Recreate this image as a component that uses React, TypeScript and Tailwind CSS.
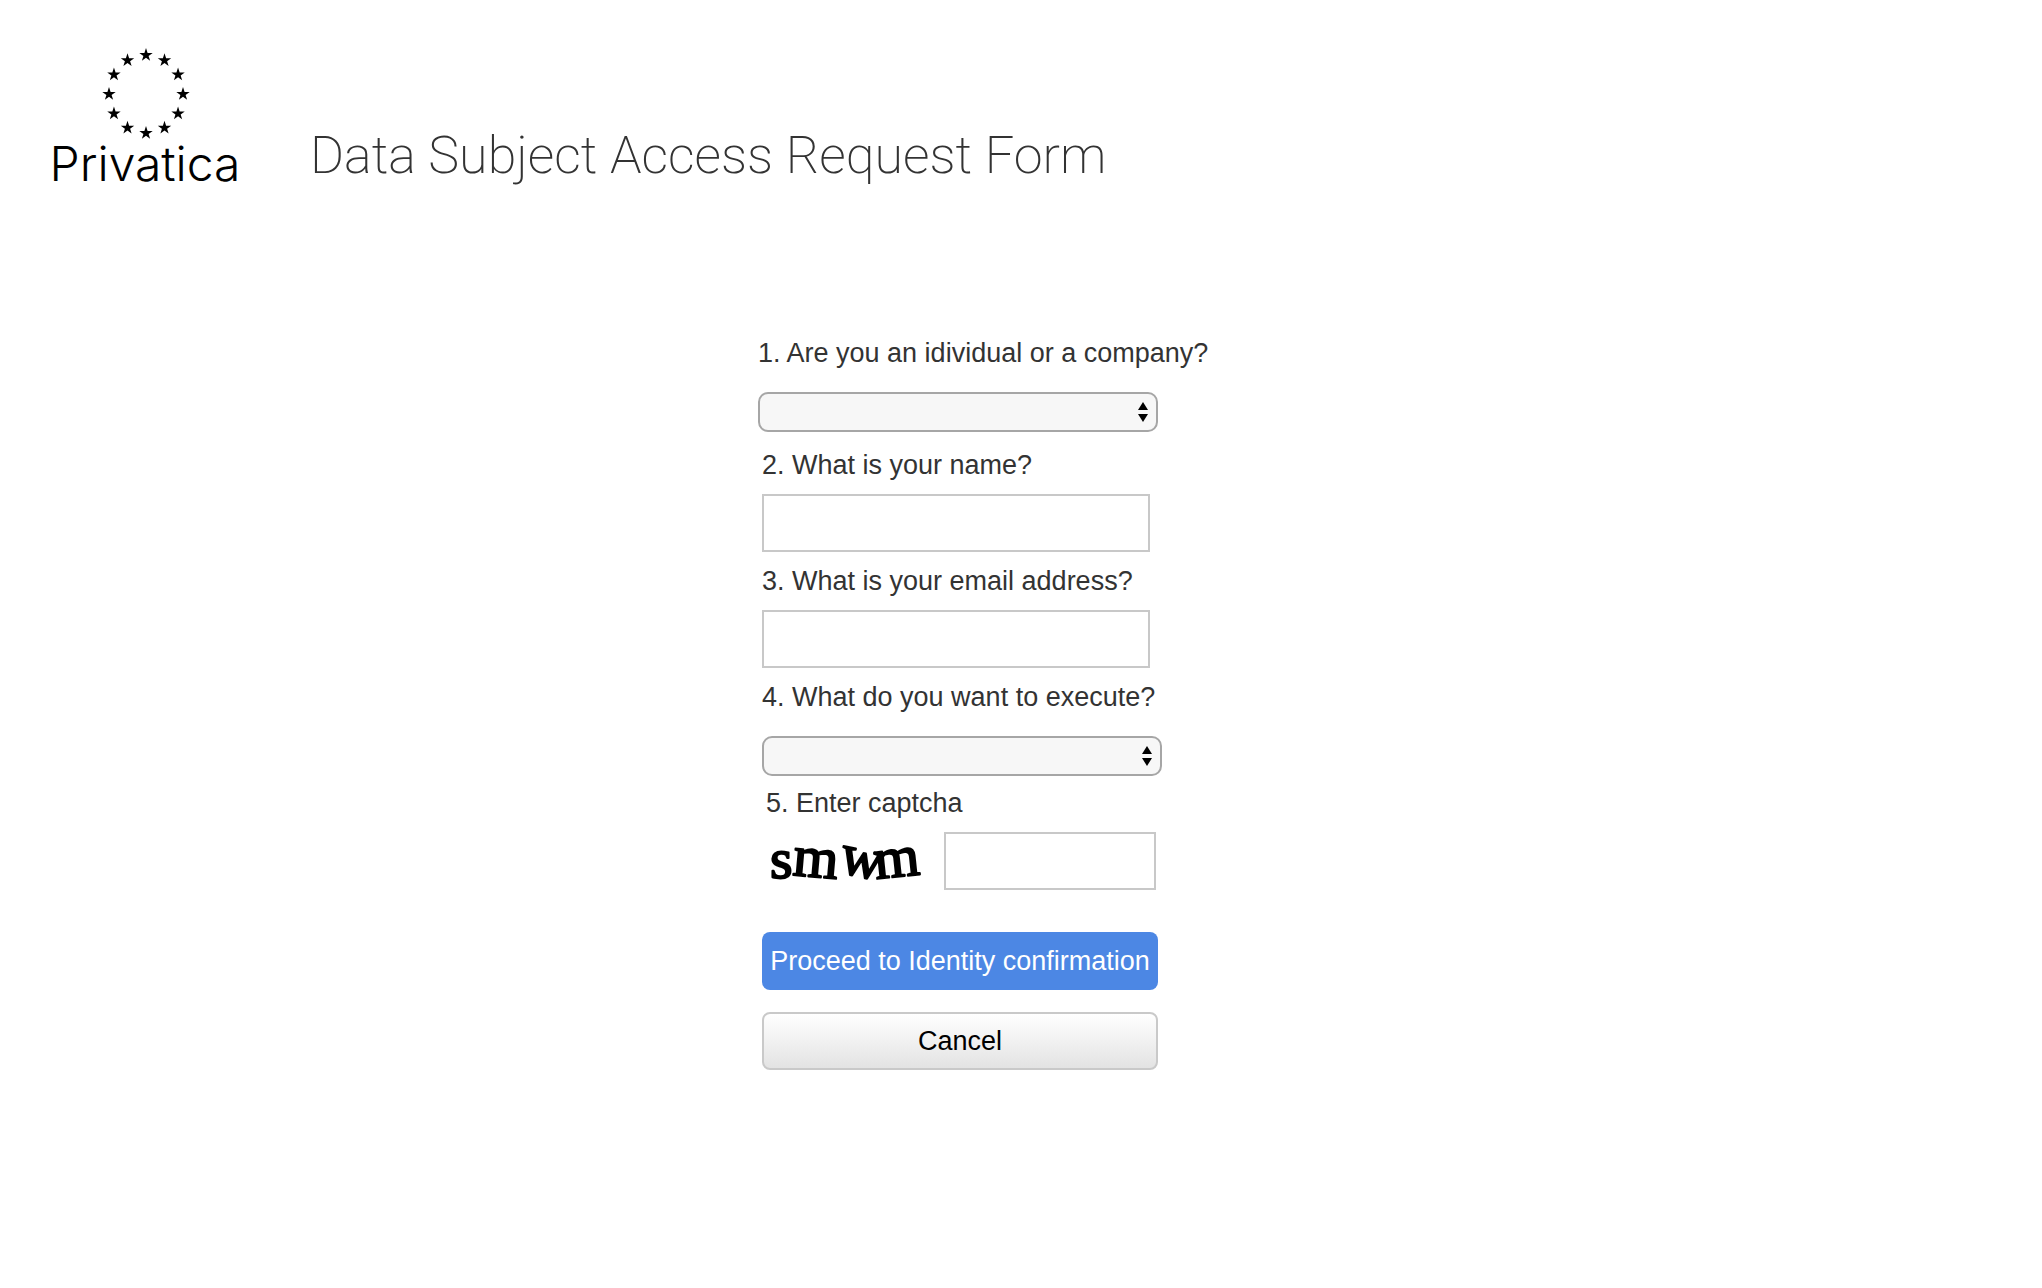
import type { ReactNode } from "react";

const stars = Array.from({ length: 12 }, (_, i) => {
  const angle = (i * Math.PI) / 6;
  return { x: 96 + 37 * Math.sin(angle), y: 51 - 39 * Math.cos(angle) };
});

function Logo() {
  return (
    <svg viewBox="0 0 192 150" className="h-[150px] w-[192px] shrink-0 overflow-visible" role="img" aria-label="Privatica">
      {stars.map((star, i) => (
        <path
          key={i}
          transform={`translate(${star.x} ${star.y})`}
          d="M0-7 1.6-2.1H6.7L2.6.9 4.1 5.8 0 2.8-4.1 5.8-2.6.9-6.7-2.1H-1.6Z"
        />
      ))}
      <text x="95" y="138" textAnchor="middle" className="font-['Inter',sans-serif] text-[48px] font-light">
        Privatica
      </text>
    </svg>
  );
}

function Captcha() {
  return (
    <svg viewBox="0 0 160 58" className="h-[58px] w-[160px] shrink-0 overflow-visible" role="img" aria-label="Captcha">
      <text
        x="4 26 72 110"
        y="46 43 40 47"
        rotate="0 5 12 -6"
        stroke="black"
        strokeWidth="2"
        strokeLinejoin="round"
        className="font-['Liberation_Serif',serif] text-[58px]"
      >
        smwm
      </text>
    </svg>
  );
}

function Label({ id, children }: { id: string; children: ReactNode }) {
  return (
    <label htmlFor={id} className="block whitespace-nowrap text-[27px] leading-[30px] text-[#333]">
      {children}
    </label>
  );
}

function Select({ id, options }: { id: string; options: string[] }) {
  return (
    <div className="relative mt-6 w-[400px]">
      <select
        id={id}
        defaultValue=""
        className="block h-10 w-full appearance-none rounded-[10px] border-2 border-[#a6a6a6] bg-[#f7f7f7] px-3 text-xl"
      >
        <option value=""></option>
        {options.map((option) => (
          <option key={option}>{option}</option>
        ))}
      </select>
      <svg viewBox="0 0 10 20" className="pointer-events-none absolute top-[10px] right-[10px] h-5 w-[10px]">
        <path d="M5 0 10 8H0ZM5 20 0 12H10Z" />
      </svg>
    </div>
  );
}

const inputClass = "block h-[58px] border-2 border-[#c8c8c8] bg-white px-3 text-[27px]";

export default function App() {
  return (
    <div className="min-h-screen bg-white font-['Liberation_Sans',Arial,sans-serif]">
      <header className="flex items-end px-[50px] pt-[43px]">
        <Logo />
        <h1 className="ml-[68px] pb-[7px] font-['Roboto',sans-serif] text-[52px] leading-[60px] font-extralight text-[#333]">
          Data Subject Access Request Form
        </h1>
      </header>

      <main className="mt-[145px] pr-[126px]">
        <form className="mx-auto w-[400px]" onSubmit={(e) => e.preventDefault()}>
          <Label id="kind">1. Are you an idividual or a company?</Label>
          <Select id="kind" options={["Individual", "Company"]} />

          <div className="mt-[18px] pl-1">
            <Label id="name">2. What is your name?</Label>
            <input id="name" type="text" className={`${inputClass} mt-[14px] w-[388px]`} />

            <div className="mt-[14px]">
              <Label id="email">3. What is your email address?</Label>
              <input id="email" type="email" className={`${inputClass} mt-[14px] w-[388px]`} />
            </div>

            <div className="mt-[14px]">
              <Label id="request">4. What do you want to execute?</Label>
              <Select id="request" options={["Access", "Rectification", "Erasure"]} />
            </div>

            <div className="mt-3 pl-1">
              <Label id="captcha">5. Enter captcha</Label>
              <div className="mt-[14px] flex gap-[18px]">
                <Captcha />
                <input id="captcha" type="text" className={`${inputClass} w-[212px]`} />
              </div>
            </div>

            <div className="mt-[42px] flex w-[396px] flex-col gap-[22px] text-[27px]">
              <button type="submit" className="h-[58px] rounded-lg bg-[#4c87e4] whitespace-nowrap text-white">
                Proceed to Identity confirmation
              </button>
              <button
                type="button"
                className="h-[58px] rounded-lg border-2 border-[#c9c9c9] bg-linear-to-b from-white to-[#e3e3e3] text-black"
              >
                Cancel
              </button>
            </div>
          </div>
        </form>
      </main>
    </div>
  );
}
